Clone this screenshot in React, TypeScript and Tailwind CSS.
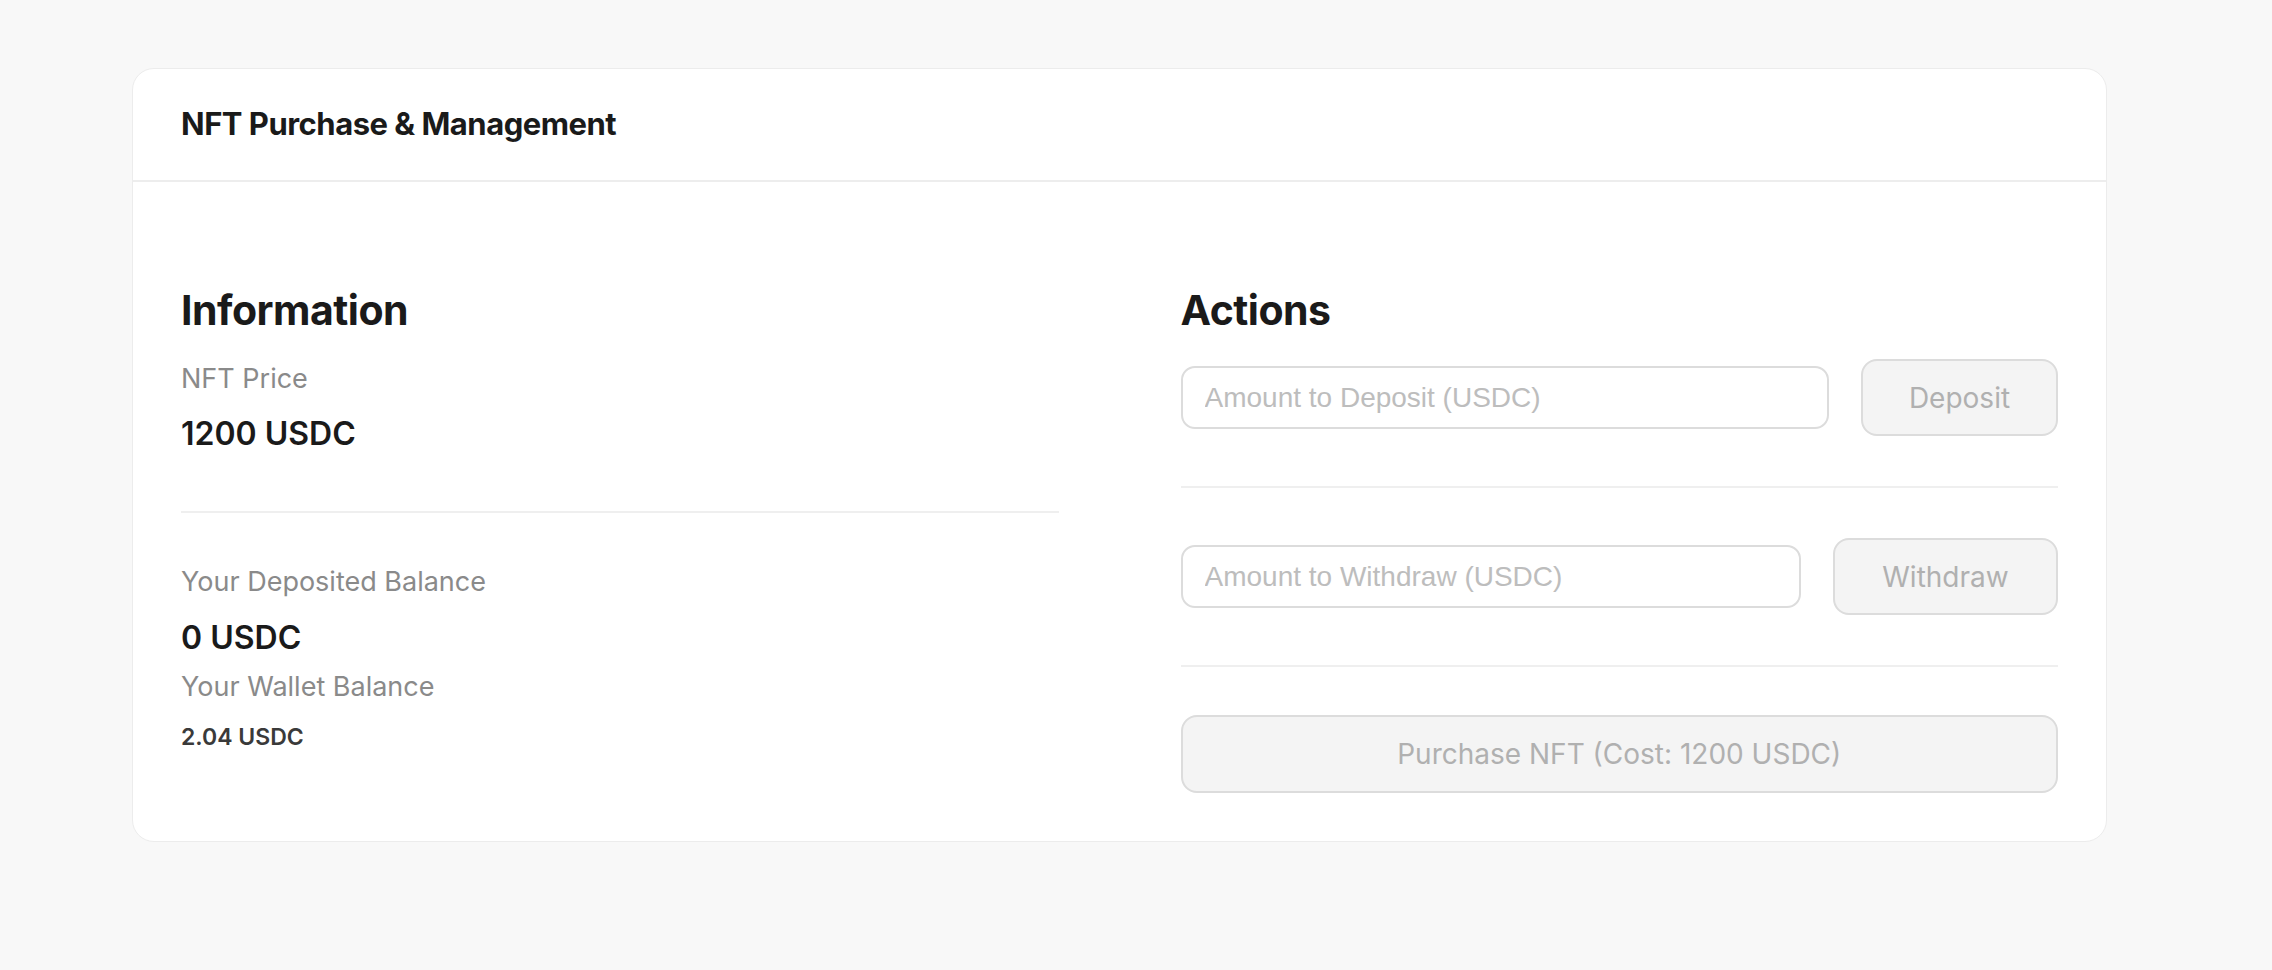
export default function App() {
  const font = { fontFamily: 'Inter, "Noto Sans", sans-serif' };
  return (
    <div className="min-h-[970px] w-full bg-[#f8f8f8] pt-[68px]" style={font}>
      <div className="ml-[132px] w-[1975px] rounded-[22px] border border-[#ececec] bg-white">
        <div className="flex h-[113px] items-center border-b-2 border-[#ededed] px-12">
          <h1 className="text-[31px] font-bold tracking-[-0.5px] text-[#1a1a1a]">NFT Purchase &amp; Management</h1>
        </div>
        <div className="grid grid-cols-2 gap-[122px] px-12 pt-[104px] pb-12">
          {/* Information */}
          <div className="flex flex-col">
            <h2 className="text-[41px] leading-[48px] font-bold tracking-[-0.5px] text-[#1a1a1a]">Information</h2>
            <div className="mt-[25px] text-[27px] leading-[40px] text-[#8a8a8a]">NFT Price</div>
            <div className="mt-[13px] text-[32px] leading-[44px] font-semibold text-[#1a1a1a]">1200 USDC</div>
            <div className="mt-[55px] h-[2px] bg-[#efefef]" />
            <div className="mt-[49px] text-[27px] leading-[40px] text-[#8a8a8a]">Your Deposited Balance</div>
            <div className="mt-[14px] text-[32px] leading-[44px] font-semibold text-[#1a1a1a]">0 USDC</div>
            <div className="mt-[7px] text-[27px] leading-[40px] text-[#8a8a8a]">Your Wallet Balance</div>
            <div className="mt-[14px] text-[23px] leading-[32px] font-semibold text-[#3a3a3a]">2.04 USDC</div>
          </div>
          {/* Actions */}
          <div className="flex flex-col">
            <h2 className="text-[41px] leading-[48px] font-bold tracking-[-0.5px] text-[#1a1a1a]">Actions</h2>
            <div className="mt-[25px] flex items-center gap-8">
              <input
                placeholder="Amount to Deposit (USDC)"
                className="h-[63px] flex-1 rounded-[14px] border-2 border-[#dcdcdc] px-[22px] text-[28px] placeholder:text-[#bdbdbd] outline-none"
                style={{ fontFamily: '"Liberation Sans", Arial, sans-serif' }}
              />
              <button className="h-[77px] w-[197px] rounded-[16px] border-2 border-[#dcdcdc] bg-[#f4f4f4] text-[28px] text-[#b0b0b0]">Deposit</button>
            </div>
            <div className="mt-[50px] h-[2px] bg-[#efefef]" />
            <div className="mt-[50px] flex items-center gap-8">
              <input
                placeholder="Amount to Withdraw (USDC)"
                className="h-[63px] flex-1 rounded-[14px] border-2 border-[#dcdcdc] px-[22px] text-[28px] placeholder:text-[#bdbdbd] outline-none"
                style={{ fontFamily: '"Liberation Sans", Arial, sans-serif' }}
              />
              <button className="h-[77px] w-[225px] rounded-[16px] border-2 border-[#dcdcdc] bg-[#f4f4f4] text-[28px] text-[#b0b0b0]">Withdraw</button>
            </div>
            <div className="mt-[50px] h-[2px] bg-[#efefef]" />
            <button className="mt-[48px] h-[78px] w-full rounded-[16px] border-2 border-[#dcdcdc] bg-[#f4f4f4] text-[28px] text-[#b0b0b0]">
              Purchase NFT (Cost: 1200 USDC)
            </button>
          </div>
        </div>
      </div>
    </div>
  );
}
